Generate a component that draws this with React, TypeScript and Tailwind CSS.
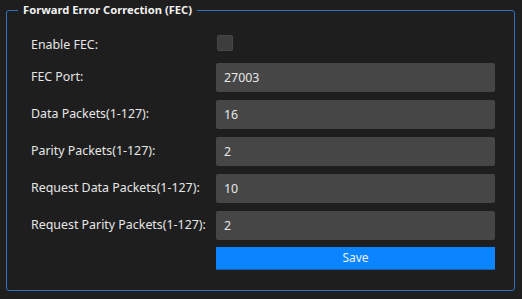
import { useState } from "react"

const fields = [
  { label: "FEC Port:", value: "27003" },
  { label: "Data Packets(1-127):", value: "16" },
  { label: "Parity Packets(1-127):", value: "2" },
  { label: "Request Data Packets(1-127):", value: "10" },
  { label: "Request Parity Packets(1-127):", value: "2" },
]

export default function App() {
  const [enabled, setEnabled] = useState(false)

  return (
    <div className="w-[522px] h-[299px] bg-[#1e1e1e] pt-[10px] pl-[6px] font-['Noto_Sans',sans-serif] text-[12.4px] text-[#e6e6e6]">
      {/* Group box */}
      <div className="relative w-[509px] h-[281px] border border-[#2f73c4] rounded-[3px] pl-[24px] pt-[24px]">
        <span className="absolute left-[11px] -top-[9px] px-[5px] bg-[#1e1e1e] font-bold text-[11.2px] leading-[16px] text-[#f2f2f2]">
          Forward Error Correction (FEC)
        </span>

        <div className="flex items-center h-[16px]">
          <span className="w-[185px] leading-none mt-[5px]">Enable FEC:</span>
          <button
            onClick={() => setEnabled(!enabled)}
            className={`w-[16px] h-[16px] ml-[1px] rounded-[2px] border border-[#474747] ${enabled ? "bg-[#0a84ff]" : "bg-[#3d3d3d]"}`}
          />
        </div>

        <div className="flex flex-col gap-[8px] mt-[12px]">
          {fields.map((f) => (
            <div key={f.label} className="flex items-center">
              <span className="w-[185px] leading-none">{f.label}</span>
              <input
                defaultValue={f.value}
                className="h-[29px] w-[279px] rounded-[2px] bg-[#464646] px-[8px] text-[12.4px] text-[#e6e6e6] outline-none"
              />
            </div>
          ))}
        </div>

        <div className="flex mt-[7px]">
          <span className="w-[185px]" />
          <button className="h-[23px] w-[279px] bg-[#0a84ff] border-b border-[#1a5fa8] text-[12px] text-[#eaf2ff]">
            Save
          </button>
        </div>
      </div>
    </div>
  )
}
